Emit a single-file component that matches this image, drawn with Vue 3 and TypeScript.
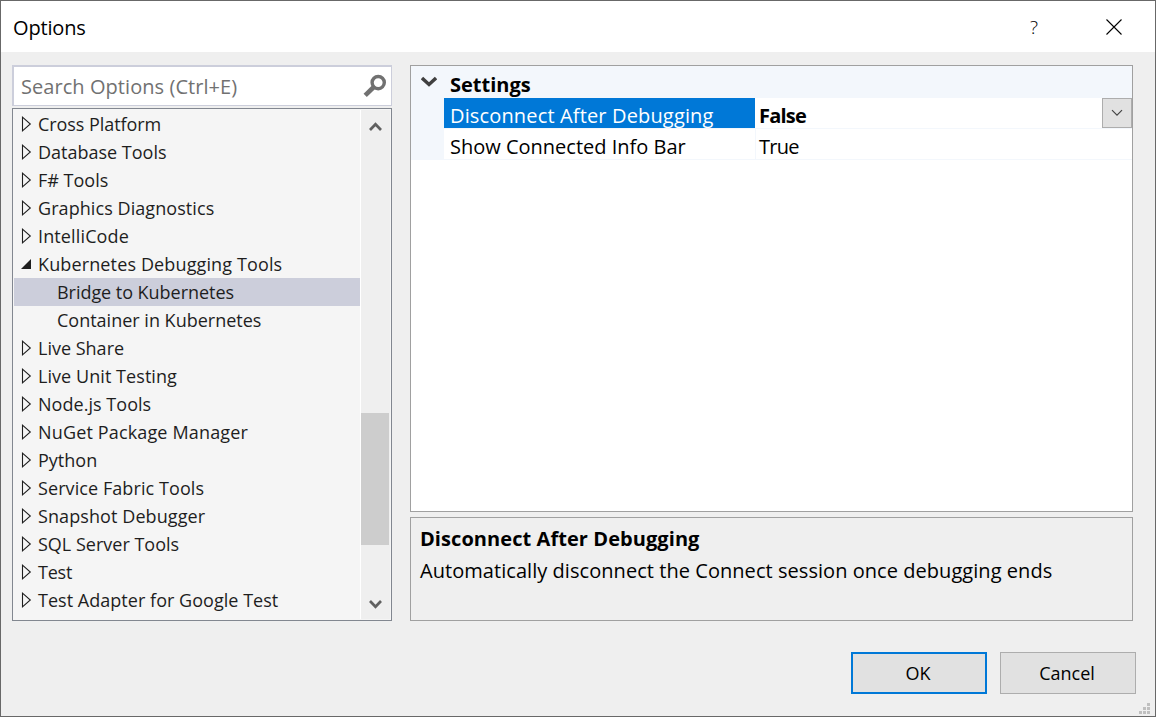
<script setup lang="ts">
interface TreeNode {
  label: string
  kind: 'closed' | 'open' | 'leaf'
  selected?: boolean
  tracking?: number
}

const nodes: TreeNode[] = [
  { label: 'Cross Platform', kind: 'closed', tracking: -0.06 },
  { label: 'Database Tools', kind: 'closed' },
  { label: 'F# Tools', kind: 'closed' },
  { label: 'Graphics Diagnostics', kind: 'closed', tracking: 0.07 },
  { label: 'IntelliCode', kind: 'closed', tracking: 0.13 },
  { label: 'Kubernetes Debugging Tools', kind: 'open', tracking: 0.13 },
  { label: 'Bridge to Kubernetes', kind: 'leaf', selected: true, tracking: -0.04 },
  { label: 'Container in Kubernetes', kind: 'leaf' },
  { label: 'Live Share', kind: 'closed' },
  { label: 'Live Unit Testing', kind: 'closed', tracking: 0.06 },
  { label: 'Node.js Tools', kind: 'closed', tracking: 0.04 },
  { label: 'NuGet Package Manager', kind: 'closed', tracking: 0.15 },
  { label: 'Python', kind: 'closed' },
  { label: 'Service Fabric Tools', kind: 'closed', tracking: 0.08 },
  { label: 'Snapshot Debugger', kind: 'closed', tracking: 0.09 },
  { label: 'SQL Server Tools', kind: 'closed' },
  { label: 'Test', kind: 'closed', tracking: -0.2 },
  { label: 'Test Adapter for Google Test', kind: 'closed', tracking: 0.03 },
]
</script>

<template>
  <div class="dialog">
    <header class="titlebar">
      <span class="title">Options</span>
      <span class="help">?</span>
      <svg class="close" width="16" height="16" viewBox="0 0 16 16">
        <path d="M0.5 0.5 15.5 15.5M15.5 0.5 0.5 15.5" fill="none" stroke="#000" stroke-width="1.1" />
      </svg>
    </header>

    <main class="content">
      <section class="left">
        <div class="search">
          <span class="placeholder">Search Options (Ctrl+E)</span>
          <svg width="24" height="24" viewBox="0 0 24 24">
            <circle cx="15.2" cy="8.6" r="6.1" fill="none" stroke="#717171" stroke-width="3.4" />
            <path d="M10.8 13 2.2 21.4" fill="none" stroke="#717171" stroke-width="4.6" />
          </svg>
        </div>
        <div class="tree">
          <ul class="nodes">
            <li v-for="n in nodes" :key="n.label" class="node" :class="[n.kind, { selected: n.selected }]">
              <svg v-if="n.kind === 'closed'" class="arrow" width="12" height="16" viewBox="0 0 12 16">
                <path d="M1.5 1.2V14.8L9.3 8Z" fill="none" stroke="#1e1e1e" stroke-width="1.1" />
              </svg>
              <svg v-else-if="n.kind === 'open'" class="arrow" width="12" height="16" viewBox="0 0 12 16">
                <path d="M10 3V13H0Z" fill="#1e1e1e" />
              </svg>
              <span class="label" :style="{ letterSpacing: (n.tracking ?? 0) + 'px' }">{{ n.label }}</span>
            </li>
          </ul>
          <div class="scrollbar">
            <svg width="13" height="9" viewBox="0 0 13 9">
              <path d="M1 8 6.5 2.3 12 8" fill="none" stroke="#606060" stroke-width="2.7" />
            </svg>
            <div class="thumb"></div>
            <svg class="down" width="13" height="9" viewBox="0 0 13 9">
              <path d="M1 1 6.5 6.7 12 1" fill="none" stroke="#606060" stroke-width="2.7" />
            </svg>
          </div>
        </div>
      </section>

      <section class="right">
        <div class="grid">
          <div class="category">
            <svg width="16" height="12" viewBox="0 0 16 12">
              <path d="M1 2 8 8.5 15 2" fill="none" stroke="#404040" stroke-width="3.4" />
            </svg>
            <b>Settings</b>
          </div>
          <div class="prop">
            <span class="name active">Disconnect After Debugging</span>
            <span class="value bold">False</span>
            <span class="drop">
              <svg width="12" height="8" viewBox="0 0 12 8">
                <path d="M1 1.2 6 6.2 11 1.2" fill="none" stroke="#444" stroke-width="1.2" />
              </svg>
            </span>
          </div>
          <div class="prop second">
            <span class="name">Show Connected Info Bar</span>
            <span class="value">True</span>
          </div>
        </div>
        <div class="description">
          <b>Disconnect After Debugging</b>
          <p>Automatically disconnect the Connect session once debugging ends</p>
        </div>
      </section>
    </main>

    <footer class="actions">
      <button class="btn primary" type="button">OK</button>
      <button class="btn" type="button">Cancel</button>
    </footer>
    <svg class="grip" width="11" height="11" viewBox="0 0 11 11" fill="#bfbfbf">
      <path d="M8 0h3v3h-3zM4 4h3v3h-3zM8 4h3v3h-3zM0 8h3v3h-3zM4 8h3v3h-3zM8 8h3v3h-3z" />
    </svg>
  </div>
</template>

<style>
body {
  margin: 0;
  overflow: hidden;
}
</style>

<style scoped>
.dialog {
  position: relative;
  box-sizing: border-box;
  width: 1156px;
  height: 717px;
  border: 1px solid #686868;
  background: #efefef;
  color: #000;
  font-family: 'Open Sans', 'Noto Sans', sans-serif;
  font-size: 20px;
  white-space: nowrap;
  display: flex;
  flex-direction: column;
}
.dialog svg {
  display: block;
  flex: none;
}
.titlebar {
  box-sizing: border-box;
  flex: none;
  height: 51px;
  background: #fff;
  display: flex;
  align-items: center;
  padding: 0 33px 0 12px;
}
.title {
  flex: 1;
  padding-top: 2px;
  letter-spacing: -0.15px;
}
.help {
  font-size: 19px;
  font-weight: 300;
  margin-right: 68px;
}
.content {
  box-sizing: border-box;
  flex: none;
  display: flex;
  gap: 18px;
  padding: 13px 22px 0 11px;
  height: 569px;
}
.left {
  width: 380px;
  display: flex;
  flex-direction: column;
  gap: 2px;
}
.search {
  box-sizing: border-box;
  height: 41px;
  border: 1px solid #cccedb;
  border-width: 2px 1px 1px 2px;
  background: #fff;
  display: flex;
  align-items: center;
  justify-content: space-between;
  padding: 0 4px 0 7px;
  color: #717171;
}
.placeholder {
  letter-spacing: 0.06px;
}
.tree {
  box-sizing: border-box;
  height: 513px;
  border: 1px solid #828790;
  background: #f5f5f5;
  display: flex;
  padding: 1px;
}
.nodes {
  margin: 0;
  padding: 0;
  list-style: none;
  width: 346px;
  border-right: 1px solid #fff;
}
.node {
  height: 28px;
  display: flex;
  align-items: center;
  padding-left: 7px;
  color: #1e1e1e;
  font-size: 18px;
}
.arrow {
  margin-right: 5px;
}
.leaf {
  padding-left: 43px;
}
.selected {
  background: #cccedb;
}
.scrollbar {
  width: 29px;
  background: #efefef;
  display: flex;
  flex-direction: column;
  align-items: center;
  padding-top: 12px;
}
.thumb {
  align-self: flex-start;
  width: 28px;
  height: 132px;
  margin-top: 282px;
  background: #cdcdcd;
}
.down {
  margin-top: 55px;
}
.right {
  width: 723px;
  display: flex;
  flex-direction: column;
  gap: 5px;
}
.grid,
.description {
  box-sizing: border-box;
  border: 1px solid #a0a0a0;
}
.grid {
  height: 447px;
  background: #fff;
}
.category {
  height: 32px;
  background: #f3f7fc;
  display: flex;
  align-items: center;
  gap: 13px;
  padding-left: 10px;
}
.category b {
  padding-top: 4px;
}
.prop {
  height: 30px;
  border-left: 33px solid #f3f7fc;
  border-bottom: 1px solid #f3f7fc;
  display: flex;
  line-height: 35px;
}
.second .name {
  border-right: 1px solid #f3f7fc;
  letter-spacing: 0;
}
.second .value {
  letter-spacing: -0.7px;
}
.name {
  box-sizing: border-box;
  width: 312px;
  padding-left: 6px;
}
.active {
  width: 311px;
  margin-right: 1px;
  background: #0078d7;
  color: #fff;
  letter-spacing: 0.15px;
}
.value {
  flex: 1;
  padding-left: 3px;
}
.bold {
  font-weight: 700;
  letter-spacing: -0.8px;
}
.drop {
  box-sizing: border-box;
  width: 30px;
  height: 30px;
  border: 1px solid #adadad;
  background: #e1e1e1;
  display: flex;
  align-items: center;
  justify-content: center;
}
.description {
  height: 104px;
  padding: 5px 9px;
  line-height: 32px;
}
.description b {
  display: block;
  letter-spacing: 0.07px;
}
.description p {
  margin: 0;
  letter-spacing: 0.05px;
}
.actions {
  display: flex;
  justify-content: flex-end;
  gap: 13px;
  padding: 31px 19px 0 0;
}
.btn {
  box-sizing: border-box;
  width: 136px;
  height: 42px;
  padding: 0 2px 0 0;
  border: 1px solid #adadad;
  background: #e1e1e1;
  color: #000;
  font: 18px 'Open Sans', 'Noto Sans', sans-serif;
}
.primary {
  border: 2px solid #0078d7;
}
.grip {
  position: absolute;
  right: 5px;
  bottom: 2px;
}
</style>
